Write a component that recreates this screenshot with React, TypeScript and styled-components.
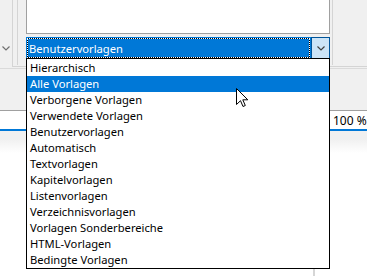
import styled, { createGlobalStyle } from "styled-components";

const GlobalStyle = createGlobalStyle`
  html, body {
    margin: 0;
    padding: 0;
    background: #f0f0f0;
  }
  body {
    font-family: "Segoe UI", "Noto Sans", sans-serif;
    font-size: 11.2px;
  }
`;

const Screen = styled.div`
  position: relative;
  width: 367px;
  height: 276px;
  overflow: hidden;
  background: #f0f0f0;
  display: flex;
  flex-direction: column;
`;

const TopSection = styled.div`
  display: flex;
  height: 69px;
  border-bottom: 1px solid #dadada;
  box-sizing: border-box;
`;

const LeftStrip = styled.div`
  width: 12px;
  padding: 39px 0 0 2px;
  box-sizing: border-box;
`;

const OuterFrame = styled.div`
  flex: 1;
  display: flex;
  height: 67px;
  border-left: 1px solid #d4d4d4;
  border-bottom: 1px solid #d4d4d4;
  padding-left: 4px;
  box-sizing: border-box;
`;

const InnerFrame = styled.div`
  display: flex;
  flex-direction: column;
  gap: 3px;
  width: 316px;
  border-left: 1px solid #d4d4d4;
  border-right: 1px solid #d4d4d4;
  padding-left: 8px;
  box-sizing: border-box;
  height: 65px;
`;

const TextArea = styled.div`
  width: 304px;
  height: 34px;
  background: #fff;
  border: 1px solid #a0a0a0;
  border-top: none;
  box-sizing: border-box;
`;

const Combo = styled.div`
  display: flex;
  width: 304px;
  height: 22px;
  border: 1px solid #0078d7;
  box-sizing: border-box;
  background: #0078d7;
`;

const ComboField = styled.div`
  flex: 1;
  display: flex;
  align-items: center;
  padding-left: 1px;
  color: #fff;
  border: 1px solid #000;
  outline: 1px dotted #fff;
  outline-offset: -1px;
  margin-right: 1px;
`;

const ComboButton = styled.div`
  width: 17px;
  display: flex;
  align-items: center;
  justify-content: center;
  background: #cce4f7;
  border: 1px solid #005499;
  margin: -1px -1px -1px 0;
`;

const MiddleGap = styled.div`
  height: 41px;
  border-bottom: 1px solid #a0a0a0;
`;

const StatusBar = styled.div`
  height: 18px;
  background: #fff;
  display: flex;
  align-items: center;
  justify-content: flex-end;
  border-bottom: 2px solid #0078d7;
  color: #000;
  font-size: 12px;
`;

const Zoom = styled.span`
  width: 34px;
`;

const Lower = styled.div`
  flex: 1;
  display: flex;
  justify-content: flex-end;
  align-items: flex-end;
  background: linear-gradient(#f0f0f0 0, #f0f0f0 8px, #ffffff 22px);
  padding-right: 52px;
`;

const EdgeMark = styled.div`
  width: 2px;
  height: 8px;
  background: #d6d6d6;
`;

const List = styled.ul`
  position: absolute;
  left: 26px;
  top: 58px;
  width: 304px;
  margin: 0;
  padding: 1px 0 0;
  list-style: none;
  background: #fff;
  border: 1px solid #000;
  box-sizing: border-box;
`;

const Item = styled.li<{ $active?: boolean }>`
  height: 16px;
  line-height: 16px;
  padding-left: 3px;
  color: ${(p) => (p.$active ? "#fff" : "#000")};
  background: ${(p) => (p.$active ? "#0078d7" : "transparent")};
  white-space: nowrap;
`;

const Cursor = styled.svg`
  position: absolute;
  left: 236px;
  top: 88px;
`;

const items = [
  "Hierarchisch",
  "Alle Vorlagen",
  "Verborgene Vorlagen",
  "Verwendete Vorlagen",
  "Benutzervorlagen",
  "Automatisch",
  "Textvorlagen",
  "Kapitelvorlagen",
  "Listenvorlagen",
  "Verzeichnisvorlagen",
  "Vorlagen Sonderbereiche",
  "HTML-Vorlagen",
  "Bedingte Vorlagen",
];

function Chevron({ color }: { color: string }) {
  return (
    <svg width="8" height="5" viewBox="0 0 8 5">
      <path d="M0.5 0.5 L4 4 L7.5 0.5" fill="none" stroke={color} strokeWidth="1.2" />
    </svg>
  );
}

function App() {
  return (
    <Screen>
      <GlobalStyle />
      <TopSection>
        <LeftStrip>
          <Chevron color="#707070" />
        </LeftStrip>
        <OuterFrame>
          <InnerFrame>
            <TextArea />
            <Combo>
              <ComboField>Benutzervorlagen</ComboField>
              <ComboButton>
                <Chevron color="#404040" />
              </ComboButton>
            </Combo>
          </InnerFrame>
        </OuterFrame>
      </TopSection>
      <MiddleGap />
      <StatusBar>
        <Zoom>100 %</Zoom>
      </StatusBar>
      <Lower>
        <EdgeMark />
      </Lower>

      <List>
        {items.map((it) => (
          <Item key={it} $active={it === "Alle Vorlagen"}>
            {it}
          </Item>
        ))}
      </List>

      <Cursor width="13" height="20" viewBox="0 0 13 20">
        <path
          d="M0.5 0.5 L0.5 16.5 L4.5 12.7 L7 18.5 L9.3 17.5 L6.8 11.8 L11.8 11.8 Z"
          fill="#fff"
          stroke="#000"
          strokeWidth="1"
        />
      </Cursor>
    </Screen>
  );
}

export default App;
